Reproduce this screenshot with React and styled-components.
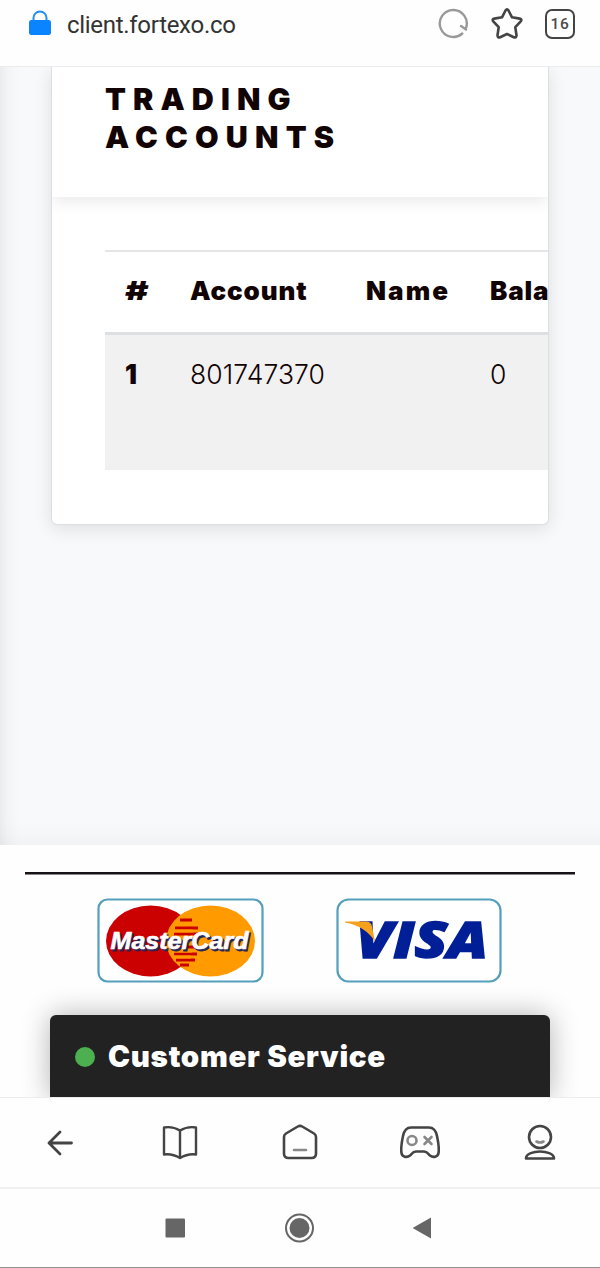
import React from "react";
import styled, { createGlobalStyle } from "styled-components";

const GlobalStyle = createGlobalStyle`
  *, *::before, *::after { box-sizing: border-box; }
  body { margin: 0; background: #fff; font-family: Inter, "Open Sans", sans-serif; color: #120404; }
  svg { display: block; }
`;

const Screen = styled.div`
  width: 600px;
  height: 1268px;
  display: flex;
  flex-direction: column;
  overflow: hidden;
  background: #fefefe;
`;

const AddressBar = styled.header`
  height: 67px;
  flex: none;
  display: flex;
  align-items: flex-start;
  padding: 9px 25px 0 28px;
  border-bottom: 1px solid #e9ebed;
`;

const Url = styled.span`
  flex: 1;
  margin-left: 15px;
  font: 400 24px/32px Roboto, sans-serif;
  letter-spacing: ${(p) => p.$spacing};
  color: #333;
`;

const BarIcons = styled.div`
  display: flex;
  align-items: center;
  height: 30px;
  gap: 22px;
`;

const TabCount = styled.span`
  width: 30px;
  height: 30px;
  border: 2.5px solid #444;
  border-radius: 7px;
  font: 500 15.5px/26px Roboto, sans-serif;
  letter-spacing: 0.6px;
  text-align: center;
  color: #4a4a4a;
`;

const Viewport = styled.main`
  flex: 1;
  min-height: 0;
  overflow: hidden;
  display: flex;
  flex-direction: column;
`;

const Page = styled.section`
  height: 778px;
  flex: none;
  padding: 0 51px;
  background:
    linear-gradient(to right, rgba(0, 0, 0, 0.055), rgba(0, 0, 0, 0.02) 8px, transparent 20px),
    linear-gradient(to top, rgba(0, 0, 0, 0.028), rgba(0, 0, 0, 0.01) 10px, transparent 24px),
    #f7f9fb;
`;

const Card = styled.article`
  height: 458px;
  background: #fff;
  border: 1px solid #dcdfe1;
  border-top: 0;
  border-radius: 0 0 6px 6px;
  box-shadow: 0 4px 18px rgba(0, 0, 0, 0.11);
  overflow: hidden;
`;

const CardHeader = styled.div`
  height: 130px;
  padding: 13px 53px 0 53px;
  box-shadow: 0 5px 14px rgba(0, 0, 0, 0.08);
`;

const Title = styled.h2`
  margin: 0;
  font-size: 30.5px;
  line-height: 38.4px;
  font-weight: 900;
`;

const TitleLine = styled.span`
  display: block;
  white-space: nowrap;
  letter-spacing: ${(p) => p.$spacing};
`;

const CardBody = styled.div`
  padding: 53px 0 0 53px;
  overflow: hidden;
`;

const Table = styled.table`
  width: 640px;
  table-layout: fixed;
  border-collapse: separate;
  border-spacing: 0;
  font-size: 26px;
  text-align: left;
`;

const HeadCell = styled.th`
  width: ${(p) => p.$width};
  height: 85px;
  padding: 0 0 3px 20px;
  border-top: 2px solid #e4e6e7;
  border-bottom: 3px solid #dce0e2;
  font-weight: 900;
  white-space: nowrap;
  letter-spacing: ${(p) => p.$spacing || "0"};
`;

const WideGlyph = styled.span`
  display: inline-block;
  transform: scaleX(1.38);
  transform-origin: left;
`;

const Cell = styled.td`
  height: 135px;
  padding: 23px 0 0 20px;
  vertical-align: top;
  background: #f1f1f1;
  font-size: 26.5px;
  line-height: 32px;
  font-weight: ${(p) => (p.$strong ? 900 : 300)};
  letter-spacing: ${(p) => p.$spacing || "0"};
`;

const Footer = styled.footer`
  flex: 1;
  padding: 27px 25px 0;
`;

const Rule = styled.div`
  height: 3px;
  background: #161216;
  border-bottom: 1px solid #8a868a;
`;

const Payments = styled.div`
  display: flex;
  gap: 71px;
  padding: 22px 0 0 71px;
`;

const ChatHeader = styled.div`
  height: 84px;
  margin: 32px 25px 0;
  padding: 0 0 2px 25px;
  display: flex;
  align-items: center;
  gap: 13px;
  border-radius: 6px 6px 0 0;
  background: #222;
  box-shadow: 0 0 28px rgba(0, 0, 0, 0.3);
  color: #fff;
  font-size: 29.5px;
  font-weight: 900;
  letter-spacing: ${(p) => p.$spacing};
`;

const OnlineDot = styled.span`
  width: 20px;
  height: 20px;
  margin-top: 2px;
  border-radius: 50%;
  background: #4caf50;
`;

const BrowserNav = styled.nav`
  height: 90px;
  flex: none;
  display: grid;
  grid-template-columns: repeat(5, 120px);
  place-items: center;
  background: #fefefe;
  border-top: 1px solid #ececec;
`;

const SystemNav = styled.nav`
  height: 81px;
  flex: none;
  display: flex;
  align-items: center;
  padding-left: 165px;
  gap: 99px;
  border-top: 2px solid #f0f0f0;
  border-bottom: 1px solid #8f8f8f;
`;

const Stroke = ({ children, width = 2.6, color = "#444", size = 40 }) => (
  <svg width={size} height={size} viewBox={`0 0 ${size} ${size}`} fill="none" stroke={color} strokeWidth={width} strokeLinecap="round" strokeLinejoin="round">
    {children}
  </svg>
);

const LockIcon = () => (
  <svg width="24" height="27" viewBox="0 0 24 27">
    <path d="M5.5 13V9a6.500 6.500 0 0 1 13 0v4" fill="none" stroke="#1f8df5" strokeWidth="2" />
    <rect x="1" y="11" width="22" height="15" rx="2.5" fill="#0a84ff" />
  </svg>
);

const MasterCard = () => (
  <svg width="168" height="86" viewBox="0 0 168 86">
    <rect x="2.5" y="2.5" width="164" height="82" rx="9" fill="#fff" stroke="#549fbb" strokeWidth="2.2" />
    <ellipse cx="54.5" cy="44" rx="44.5" ry="35.5" fill="#cb0000" />
    <ellipse cx="114.5" cy="44" rx="44.5" ry="35.5" fill="#ff9a00" />
    <g stroke="#cb0000" strokeWidth="3">
      <path d="M84 23h12M79 31h23M78 37h25M78 50h25M78 57h23M80 63h19M84 68h9" />
    </g>
    <g stroke="#ff9a00" strokeWidth="3">
      <path d="M77 27.5h17M75 34h22M75 54h21M77 60h18" />
    </g>
    <g fontFamily="Liberation Sans, sans-serif" fontWeight="700" fontStyle="italic" fontSize="24.5">
      <text x="16" y="53.5" textLength="138" lengthAdjust="spacingAndGlyphs" fill="#292557" stroke="#292557" strokeWidth=".8">MasterCard</text>
      <text x="14.5" y="52" textLength="138" lengthAdjust="spacingAndGlyphs" fill="#fff" stroke="#fff" strokeWidth=".6">MasterCard</text>
    </g>
  </svg>
);

const Visa = () => (
  <svg width="168" height="86" viewBox="0 0 168 86">
    <rect x="2.5" y="2.5" width="163" height="82" rx="11" fill="#fff" stroke="#549fbb" strokeWidth="2.2" />
    <text x="21" y="61" textLength="132" lengthAdjust="spacingAndGlyphs" fontFamily="Open Sans, sans-serif" fontWeight="800" fontStyle="italic" fontSize="49" fill="#001f97" stroke="#001f97" strokeWidth="1.5">VISA</text>
    <path d="M10 24.500H31q5 0 6 5l3 15Q30 29 10 25.500Z" fill="#f6a11b" />
  </svg>
);

export default function App() {
  return (
    <>
      <GlobalStyle />
      <Screen>
        <AddressBar>
          <LockIcon />
          <Url $spacing="-0.3px">client.fortexo.co</Url>
          <BarIcons>
            <Stroke size={32} color="#999" width={2.4}>
              <path d="M25.3 25.500a13.500 13.500 0 1 1 3.700-5.500M29 21.500l-5-3.400" />
            </Stroke>
            <Stroke size={32} width={2.6}>
              <path d="M14.500 2.500Q16 0.200 17.500 2.500L21 9.300 28.700 10.600Q31.500 11.300 29.500 13.600L24.300 19.200 25.500 27.200Q25.500 30 22.800 29.200L16 26 9.200 29.200Q6.500 30 6.500 27.200L7.700 19.200 2.500 13.600Q.5 11.300 3.300 10.600L11 9.300Z" />
            </Stroke>
            <TabCount>16</TabCount>
          </BarIcons>
        </AddressBar>

        <Viewport>
          <Page>
            <Card>
              <CardHeader>
                <Title>
                  <TitleLine $spacing="7.1px">TRADING</TitleLine>
                  <TitleLine $spacing="7.2px">ACCOUNTS</TitleLine>
                </Title>
              </CardHeader>
              <CardBody>
                <Table>
                  <thead>
                    <tr>
                      <HeadCell $width="65px"><WideGlyph>#</WideGlyph></HeadCell>
                      <HeadCell $width="176px" $spacing="0.9px">Account</HeadCell>
                      <HeadCell $width="124px" $spacing="2.1px">Name</HeadCell>
                      <HeadCell $spacing="0.8px">Balance</HeadCell>
                    </tr>
                  </thead>
                  <tbody>
                    <tr>
                      <Cell $strong>1</Cell>
                      <Cell $spacing="0.1px">801747370</Cell>
                      <Cell />
                      <Cell>0</Cell>
                    </tr>
                  </tbody>
                </Table>
              </CardBody>
            </Card>
          </Page>

          <Footer>
            <Rule />
            <Payments>
              <MasterCard />
              <Visa />
            </Payments>
            <ChatHeader $spacing="0.7px">
              <OnlineDot />
              Customer Service
            </ChatHeader>
          </Footer>
        </Viewport>

        <BrowserNav>
          <Stroke width={2.8}>
            <path d="M31.500 20H9M20 9 9 20l11 11" />
          </Stroke>
          <Stroke width={2.4}>
            <path d="M20 7.500Q12.500 3 4 4.500V31.500Q12.500 30.500 20 35Q27.500 30.500 36 31.500V4.500Q27.500 3 20 7.500ZV35" />
          </Stroke>
          <Stroke>
            <path d="M17.800 3.500Q20 2.200 22.200 3.500L34 10.500Q36 11.800 36 14V30.500Q36 35 31.500 35H8.500Q4 35 4 30.500V14Q4 11.800 6 10.500Z" />
            <path d="M14 27H26" stroke="#888" />
          </Stroke>
          <Stroke>
            <path d="M11 4.500H29C34 4.500 36 8 37 13C38.500 20 39 27 38.500 30C38 34 33 35 30 32.500C28 30.500 27 28.500 24 28.500H16C13 28.500 12 30.500 10 32.500C7 35 2 34 1.500 30C1 27 1.500 20 3 13C4 8 6 4.500 11 4.500Z" />
            <g stroke="#888">
              <circle cx="12" cy="17.500" r="4.500" />
              <path d="M24.500 14l7 7M31.500 14l-7 7" />
            </g>
          </Stroke>
          <Stroke>
            <circle cx="20" cy="14" r="11" />
            <path d="M16.500 18.500q3.500 2 7 0" stroke="#888" />
            <path d="M6 35.500C6 30.500 14 28.500 20 28.500S34 30.500 34 35.500Z" />
          </Stroke>
        </BrowserNav>

        <SystemNav>
          <svg width="20" height="20"><rect x=".5" y=".5" width="19.500" height="19" rx="1" fill="#666" /></svg>
          <svg width="30" height="30">
            <circle cx="15.500" cy="15" r="13.500" fill="none" stroke="#666" strokeWidth="2" />
            <circle cx="15.500" cy="15" r="10" fill="#666" />
          </svg>
          <svg width="20" height="24"><path d="M-.5 12 18 1.500v21Z" fill="#666" /></svg>
        </SystemNav>
      </Screen>
    </>
  );
}
